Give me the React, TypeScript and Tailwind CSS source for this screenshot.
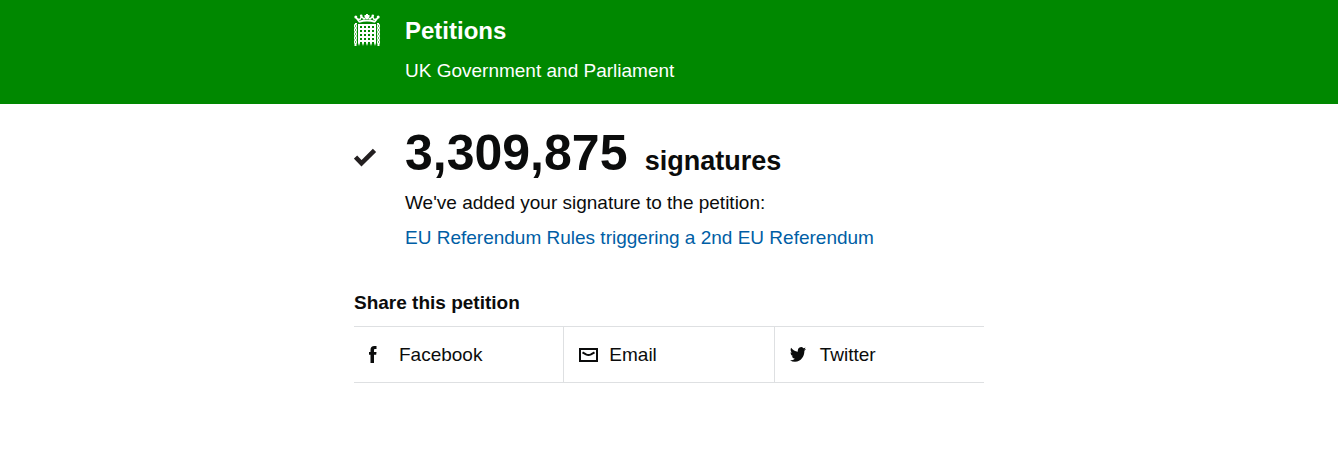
import type { ReactElement, ReactNode } from 'react'

function Portcullis(): ReactElement {
  const bars = [4, 8, 12, 16, 20]
  const rows = [11, 15, 19, 23, 27]
  const links = [12, 16, 20, 24, 28]

  return (
    <svg width="27" height="33" viewBox="0 0 27 33" fill="none" stroke="#fff" aria-hidden="true">
      {/* crown */}
      <path d="M2 3.500 5.500 8M24 3.500 20.500 8" strokeWidth="1.600" />
      <path d="M5 7.800Q13 5.200 21 7.800" strokeWidth="1.800" />
      <path d="M3 5l3 .5L7.500 2.500 10 5l3-2.500L16 5l2.500-2.500L20 5.500 23 5" strokeWidth="1.400" />
      <g fill="#fff" stroke="none">
        <circle cx="1.800" cy="3" r="1.500" />
        <circle cx="24.200" cy="3" r="1.500" />
        <circle cx="7.200" cy="1.800" r="1.300" />
        <circle cx="18.800" cy="1.800" r="1.300" />
        <path d="M12 0h2v1h1.500v2H14v2h-2V3h-1.500V1H12z" />
      </g>
      {/* gate */}
      {rows.map((y) => (
        <path key={y} d={`M4 ${y}h18`} strokeWidth="2" />
      ))}
      {bars.map((x) => (
        <path key={x} d={`M${x} 10h2v19l-1 3-1-3z`} fill="#fff" stroke="none" />
      ))}
      <path d="M1 9.500h2M23 9.500h2" />
      {/* chains */}
      {links.map((y) => (
        <g key={y} strokeWidth="1.200">
          <ellipse cx="1.500" cy={y} rx="1" ry="1.600" />
          <ellipse cx="24.500" cy={y} rx="1" ry="1.600" />
        </g>
      ))}
      <path d="M1.500 29.500V32M24.500 29.500V32" strokeWidth="2" />
    </svg>
  )
}

function Tick(): ReactElement {
  return (
    <svg width="24" height="20" viewBox="0 0 24 20" fill="none" aria-hidden="true">
      <path d="M1.500 9 7.500 15.300 20.500 2.300" stroke="#231f20" strokeWidth="4.600" />
    </svg>
  )
}

function FacebookIcon(): ReactElement {
  return (
    <svg width="8" height="17" viewBox="0 0 8 17" fill="#0b0c0c" aria-hidden="true">
      <path d="M1.500 17V8.800H0V5.900h1.500V4C1.500 1.400 2.800 0 5.300 0H7.500v3H6.200C5.300 3 5 3.400 5 4.200v1.700h2.500l-.3 2.900H5V17z" />
    </svg>
  )
}

function EmailIcon(): ReactElement {
  return (
    <svg width="19" height="14" viewBox="0 0 19 14" fill="none" stroke="#0b0c0c" strokeWidth="2" aria-hidden="true">
      <path d="M1 1h17v12H1z" />
      <path d="M3.500 4.300 7 6.400q2.500 1.300 5 0l3.500-2.100" />
    </svg>
  )
}

function TwitterIcon(): ReactElement {
  return (
    <svg width="16" height="15" viewBox="0 2 24 20" preserveAspectRatio="none" fill="#0b0c0c" aria-hidden="true">
      <path d="M23.950 4.570a10 10 0 0 1-2.820.770 4.960 4.960 0 0 0 2.160-2.720c-.950.550-2 .950-3.130 1.180a4.920 4.920 0 0 0-8.380 4.480C7.690 8.090 4.070 6.130 1.640 3.160a4.820 4.820 0 0 0-.670 2.480c0 1.710.870 3.210 2.190 4.100a4.900 4.900 0 0 1-2.230-.620v.060a4.920 4.920 0 0 0 3.950 4.830 5 5 0 0 1-2.210.080 4.940 4.940 0 0 0 4.600 3.420A9.870 9.870 0 0 1 0 19.540a13.990 13.990 0 0 0 7.560 2.210c9.050 0 14-7.500 14-13.980l-.020-.640a9.940 9.940 0 0 0 2.410-2.560z" />
    </svg>
  )
}

function ShareLink({ href, icon, children }: { href: string; icon: ReactNode; children: ReactNode }): ReactElement {
  return (
    <li className="flex-1 border-l border-[#dee0e2] first:border-l-0">
      <a href={href} className="flex h-[55px] items-center pl-[15px]">
        {icon}
        {children}
      </a>
    </li>
  )
}

export default function App(): ReactElement {
  return (
    <div className="min-h-screen bg-white font-['Liberation_Sans',Arial,sans-serif] text-[19px] leading-[25px] text-[#0b0c0c]">
      <header className="bg-[#008800] text-white">
        <div className="mx-auto flex max-w-[630px] pt-[14px] pb-[21px]">
          <div className="w-[51px] shrink-0">
            <Portcullis />
          </div>
          <div>
            <a href="/" className="block pt-1 text-2xl leading-[25px] font-bold">
              Petitions
            </a>
            <p className="pt-[15px]">UK Government and Parliament</p>
          </div>
        </div>
      </header>

      <main className="mx-auto max-w-[630px]">
        <section className="flex pt-6">
          <div className="w-[51px] shrink-0 pt-5">
            <Tick />
          </div>
          <div>
            <h1 className="font-bold">
              <span className="mr-3 text-[50px] leading-[50px]">3,309,875</span>{' '}
              <span className="text-[27px]">signatures</span>
            </h1>
            <p className="pt-3">We've added your signature to the petition:</p>
            <p className="pt-[10px]">
              <a href="#petition" className="text-[#005ea5]">
                EU Referendum Rules triggering a 2nd EU Referendum
              </a>
            </p>
          </div>
        </section>

        <section className="pt-10">
          <h2 className="font-bold">Share this petition</h2>
          <ul className="mt-[11px] flex border-y border-[#dee0e2]">
            <ShareLink href="#facebook" icon={<span className="w-[30px]"><FacebookIcon /></span>}>
              Facebook
            </ShareLink>
            <ShareLink href="#email" icon={<span className="w-[30px]"><EmailIcon /></span>}>
              Email
            </ShareLink>
            <ShareLink href="#twitter" icon={<span className="w-[30px]"><TwitterIcon /></span>}>
              Twitter
            </ShareLink>
          </ul>
        </section>
      </main>
    </div>
  )
}
